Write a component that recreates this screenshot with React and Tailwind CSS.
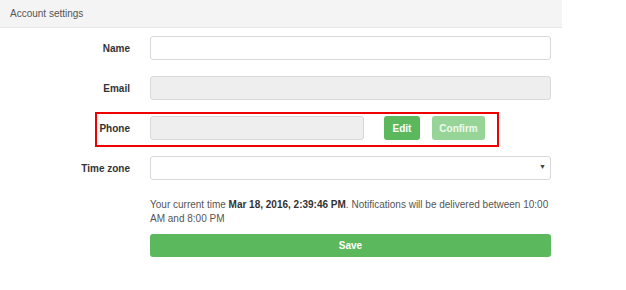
import React from 'react';

const Label = ({ children }) => (
  <label className="text-right text-[10px] font-bold text-[#333]">{children}</label>
);

const App = () => {
  return (
    <div className="w-[626px] h-[290px] bg-white font-['Liberation_Sans',Arial,sans-serif]">
      <div className="w-[562px]">
        <div className="h-[28px] bg-[#f4f4f4] border-b border-[#e6e6e6] flex items-center pl-[10px] text-[10px] text-[#555]">
          Account settings
        </div>

        <form className="pt-[8px] pr-[11px]">
          <div className="grid grid-cols-[130px_1fr] gap-x-5 items-center">
            <Label>Name</Label>
            <input type="text" className="h-6 rounded-[3px] border border-[#d9d9d9] bg-white px-2 text-[10px] outline-none" />
          </div>

          <div className="grid grid-cols-[130px_1fr] gap-x-5 items-center mt-4">
            <Label>Email</Label>
            <input type="text" disabled className="h-6 rounded-[3px] border border-[#d9d9d9] bg-[#eeeeee] px-2 text-[10px]" />
          </div>

          <div className="relative grid grid-cols-[130px_1fr] gap-x-5 items-center mt-4">
            <div className="absolute left-[95px] top-[-4px] w-[404px] h-[35px] border-2 border-[#ee0000] pointer-events-none" />
            <Label>Phone</Label>
            <div className="flex items-center">
              <input type="text" disabled className="w-[214px] h-6 rounded-[3px] border border-[#d9d9d9] bg-[#eeeeee] px-2 text-[10px]" />
              <button type="button" className="ml-5 w-[36px] h-6 rounded-[3px] bg-[#5cb85c] text-white text-[10px] font-bold">
                Edit
              </button>
              <button type="button" className="ml-3 w-[53px] h-6 rounded-[3px] bg-[#97d497] text-[#effaef] text-[10px] font-bold">
                Confirm
              </button>
            </div>
          </div>

          <div className="grid grid-cols-[130px_1fr] gap-x-5 items-center mt-4">
            <Label>Time zone</Label>
            <div className="relative h-6 rounded-[3px] border border-[#d9d9d9] bg-white">
              <span className="absolute right-[4px] top-[5px] text-[7px] text-[#444]">▼</span>
            </div>
          </div>

          <div className="grid grid-cols-[130px_1fr] gap-x-5 mt-[18px]">
            <div />
            <div>
              <p className="text-[10px] leading-[14px] text-[#555]">
                Your current time <b className="text-[#333]">Mar 18, 2016, 2:39:46 PM</b>. Notifications will be delivered between 10:00 AM and 8:00 PM
              </p>
              <button type="button" className="mt-[8px] w-full h-[23px] rounded-[3px] bg-[#5cb85c] text-white text-[10px] font-bold">
                Save
              </button>
            </div>
          </div>
        </form>
      </div>
    </div>
  );
};

export default App;
